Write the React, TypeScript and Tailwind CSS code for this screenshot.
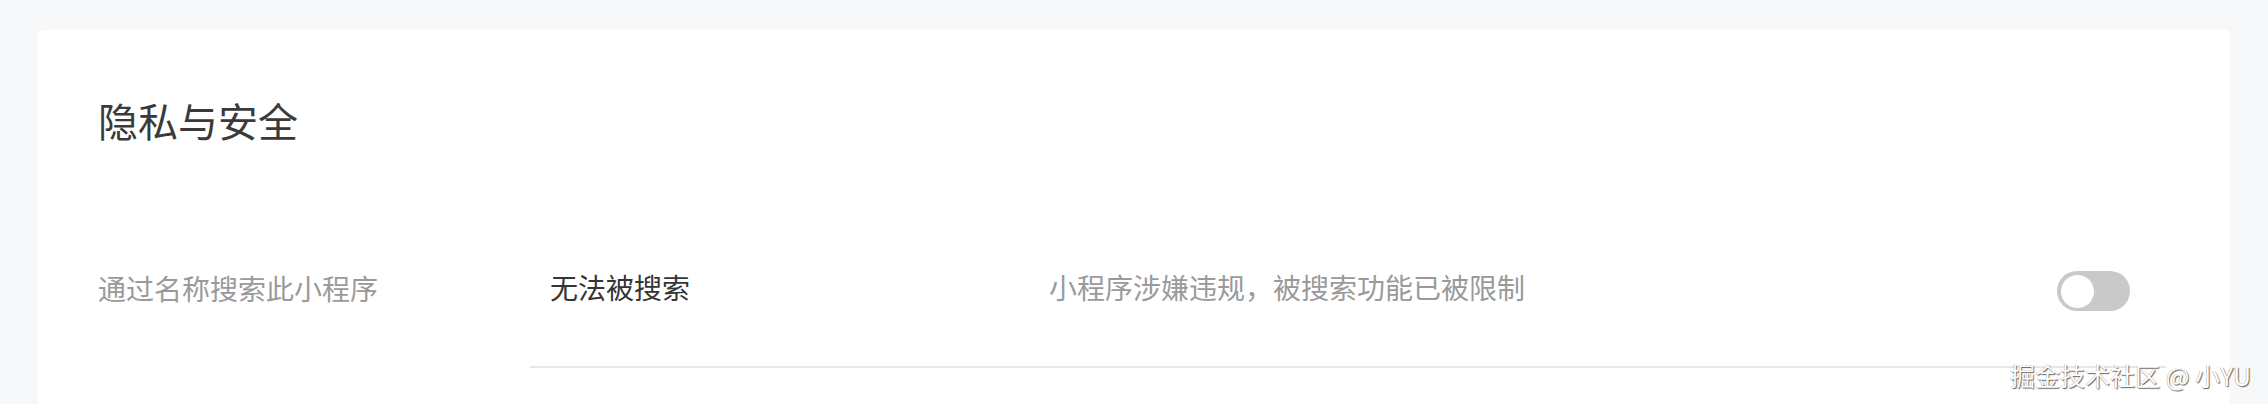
import React from "react";

export default function App() {
  return (
    <div
      className="relative h-[404px] w-[2268px] overflow-hidden bg-[#f7f8fa] px-[38px] pt-[30px]"
      style={{ fontFamily: '"Noto Sans CJK SC", "Noto Sans", sans-serif' }}
    >
      <div className="h-[374px] rounded-t-[5px] bg-white pl-[60px] pr-[64px] pt-[62px]">
        <h2 className="text-[40px] leading-[56px] font-normal text-[#3a3a3a]">隐私与安全</h2>
        <div className="mt-[64px] flex h-[156px] items-stretch">
          <div className="flex w-[432px] shrink-0 items-center pb-[4px] text-[28px] text-[#9a9a9a]">
            通过名称搜索此小程序
          </div>
          <div className="flex flex-1 items-center border-b-2 border-[#e7e7e7] pl-[20px] pr-[36px]">
            <div className="w-[499px] shrink-0 pb-[4px] text-[28px] text-[#353535]">无法被搜索</div>
            <div className="flex-1 pb-[4px] text-[28px] text-[#9a9a9a]">小程序涉嫌违规，被搜索功能已被限制</div>
            <div className="mt-[4px] flex h-[40px] w-[73px] items-center rounded-full bg-[#c9c9c9] px-[4px]">
              <div className="h-[33px] w-[33px] rounded-full bg-white" />
            </div>
          </div>
        </div>
      </div>
      <div
        className="absolute bottom-[15px] right-[17px] text-[25px] leading-[28px] text-white"
        style={{ textShadow: "1px 1px 1px rgba(0,0,0,0.6), -0.5px -0.5px 0.5px rgba(0,0,0,0.35)" }}
      >
        掘金技术社区 @ 小YU
      </div>
    </div>
  );
}
